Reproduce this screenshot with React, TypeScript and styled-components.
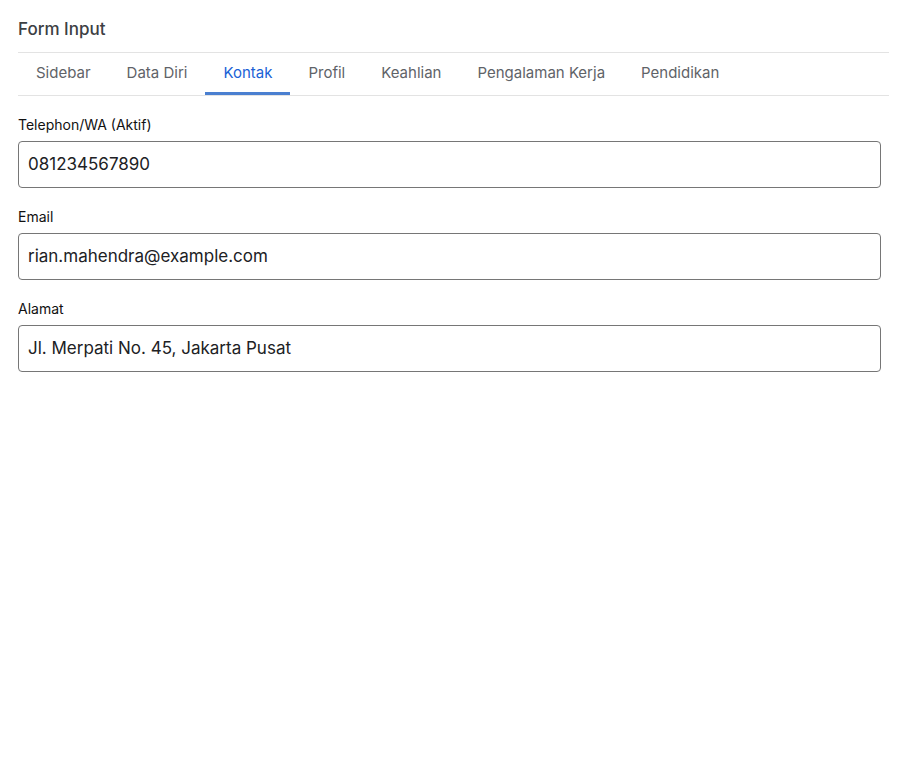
import React, { useState } from 'react'
import styled, { createGlobalStyle } from 'styled-components'

const GlobalStyle = createGlobalStyle`
    html, body {
        margin: 0;
        padding: 0;
        background: #ffffff;
    }

    body {
        font-family: Inter, "Open Sans", "Liberation Sans", sans-serif;
        color: #202124;
    }
`;

const Page = styled.div`
    padding: 18px 21px 0 18px;
`;

const Title = styled.h1`
    margin: 0;
    height: 34px;
    font-size: 17px;
    font-weight: 500;
    line-height: 22px;
    color: #3c4043;
    border-bottom: 1px solid #e3e3e3;
`;

const TabBar = styled.div`
    display: flex;
    height: 42px;
    border-bottom: 1px solid #e3e3e3;
`;

const Tab = styled.button<{ $active?: boolean }>`
    background: none;
    border: none;
    padding: 0 18px;
    margin: 0;
    font-family: inherit;
    font-size: 15px;
    color: ${p => (p.$active ? '#1a62d6' : '#5f6368')};
    border-bottom: 3px solid ${p => (p.$active ? '#4a7fd0' : 'transparent')};
    cursor: pointer;
`;

const Form = styled.div`
    padding: 20px 8px 0 0;
    display: flex;
    flex-direction: column;
    gap: 20px;
`;

const Field = styled.label`
    display: flex;
    flex-direction: column;
    gap: 7px;
`;

const Label = styled.span`
    font-size: 14px;
    line-height: 18px;
    color: #111111;
`;

const Input = styled.input`
    box-sizing: border-box;
    width: 100%;
    height: 47px;
    padding: 0 9px 2px;
    border: 1px solid #767676;
    border-radius: 4px;
    font-family: inherit;
    font-size: 17px;
    color: #202124;
    outline: none;
`;

const tabs = ['Sidebar', 'Data Diri', 'Kontak', 'Profil', 'Keahlian', 'Pengalaman Kerja', 'Pendidikan']

const fields = [
    { label: 'Telephon/WA (Aktif)', value: '081234567890' },
    { label: 'Email', value: 'rian.mahendra@example.com' },
    { label: 'Alamat', value: 'Jl. Merpati No. 45, Jakarta Pusat' },
]

export default function App() {
    const [active, setActive] = useState('Kontak')

    return (
        <Page>
            <GlobalStyle />
            <Title>Form Input</Title>
            <TabBar>
                {tabs.map(t => (
                    <Tab key={t} $active={t === active} onClick={() => setActive(t)}>
                        {t}
                    </Tab>
                ))}
            </TabBar>
            <Form>
                {fields.map(f => (
                    <Field key={f.label}>
                        <Label>{f.label}</Label>
                        <Input defaultValue={f.value} />
                    </Field>
                ))}
            </Form>
        </Page>
    )
}
